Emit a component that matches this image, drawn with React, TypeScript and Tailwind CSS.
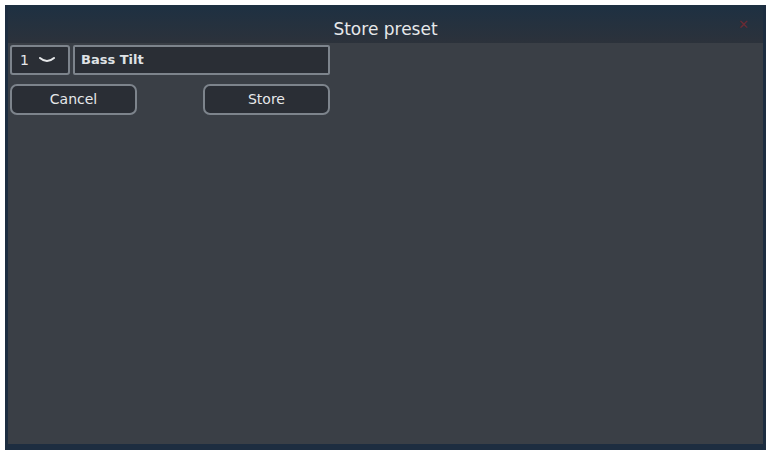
import { useState } from "react";

export default function App() {
  const [name, setName] = useState<string>("Bass Tilt");

  return (
    <div className="w-[770px] h-[451px] bg-white pt-[5px] pl-[5px] pr-[4px] pb-[1px] font-['DejaVu_Sans',sans-serif]">
      <div className="h-full flex flex-col border-x-[3px] border-b-[6px] border-[#1d2d40] bg-[#3a3f46]">
        <div className="relative h-[38px] shrink-0 flex items-center justify-center bg-gradient-to-b from-[#1d3042] to-[#2c323b]">
          <span className="text-[17px] text-[#e6e8ea] pt-[11px]">Store preset</span>
          <span className="absolute right-[14px] top-[10px] text-[13px] text-[#6a2a33]">✕</span>
        </div>

        <div className="flex flex-col gap-[9px] pl-[2px] pt-[2px] w-[322px]">
          <div className="flex gap-[3px] h-[30px]">
            <div className="w-[60px] flex items-center gap-[10px] pl-[8px] border-2 border-[#7d848c] rounded-[3px] bg-[#2a2e35] text-[14px] text-[#e6e8ea]">
              <span>1</span>
              <svg width="16" height="8" viewBox="0 0 16 8" fill="none">
                <path d="M1 2 Q8 8 15 2" stroke="#e6e8ea" strokeWidth="2" strokeLinecap="round" />
              </svg>
            </div>
            <input
              value={name}
              onChange={(e) => setName(e.target.value)}
              className="flex-1 px-[6px] border-2 border-[#7d848c] rounded-[2px] bg-[#2a2e35] text-[13px] font-bold text-[#dfe2e5] outline-none"
            />
          </div>

          <div className="flex justify-between h-[31px]">
            <button className="w-[127px] border-2 border-[#7d848c] rounded-[7px] bg-[#2a2e35] text-[14px] text-[#e6e8ea]">
              Cancel
            </button>
            <button className="w-[127px] border-2 border-[#7d848c] rounded-[7px] bg-[#2a2e35] text-[14px] text-[#e6e8ea]">
              Store
            </button>
          </div>
        </div>
      </div>
    </div>
  );
}
